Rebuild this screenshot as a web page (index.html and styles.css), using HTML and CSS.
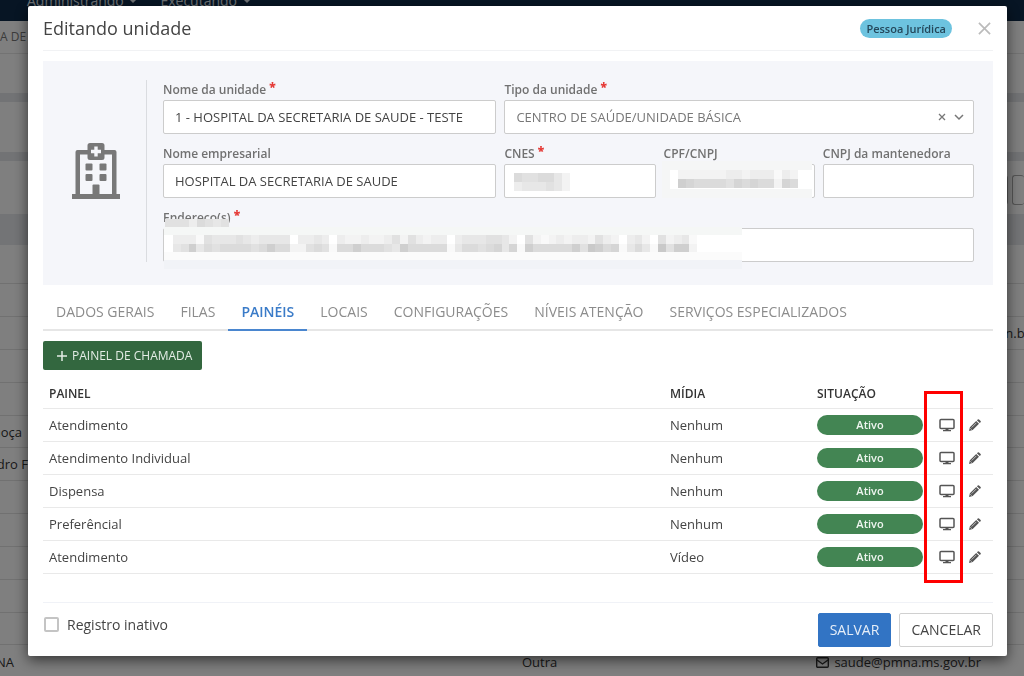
FILE: index.html
```html
<!DOCTYPE html>
<html lang="pt-BR">
<head>
<meta charset="utf-8">
<meta name="viewport" content="width=device-width, initial-scale=1">
<title>Editando unidade</title>
<link rel="stylesheet" href="styles.css">
</head>
<body>
<svg class="defs" aria-hidden="true">
  <symbol id="monitor" viewBox="0 0 16 14">
    <rect x="1" y="1.500" width="14" height="9" rx="1" fill="none" stroke="currentColor" stroke-width="1.500"/>
    <path d="M6.500 10.500h3v1.500h2.500v1.200H4v-1.200h2.500z" fill="currentColor"/>
  </symbol>
  <symbol id="pencil" viewBox="0 0 12 12">
    <path d="M0 12l.9-3.700 6.300-6.300 2.800 2.800-6.300 6.300zM7.900 1.300L8.800.4q.6-.5 1.200 0l1.600 1.600q.5.6 0 1.200l-.9.9z" fill="currentColor"/>
    <path d="M2.600 8.600l4.700-4.700M1.300 9.300l1.400 1.400" stroke="#fff" stroke-width=".6"/>
  </symbol>
</svg>

<div class="page" inert>
  <nav class="topbar"><span>Administrando <i class="caret"></i></span><span>Executando <i class="caret"></i></span></nav>
  <div class="crumb">A DE S</div>
  <div class="block block-a"></div>
  <div class="block block-b"></div>
  <div class="tools"><span class="tool"></span><span class="tool tool-last"></span></div>
  <div class="list-head"></div>
  <div class="list">
    <div class="row row-tall"></div>
    <div class="row"></div>
    <div class="row"><span class="cell-end">n.br</span></div>
    <div class="row"></div>
    <div class="row"></div>
    <div class="row"><span class="cell-cut">noça</span></div>
    <div class="row"><span class="cell-cut">dro F</span></div>
    <div class="row"></div>
    <div class="row"></div>
    <div class="row"></div>
    <div class="row"></div>
    <div class="row"></div>
    <div class="row row-last">
      <span class="cell-cut">NA</span>
      <span class="cell-type">Outra</span>
      <span class="cell-mail"><svg class="mail" viewBox="0 0 13 11"><rect x=".7" y=".7" width="11.600" height="9.600" rx="1" fill="none" stroke="currentColor" stroke-width="1.400"/><path d="M1 3l5.500 4L12 3" fill="none" stroke="currentColor" stroke-width="1.400"/></svg>saude@pmna.ms.gov.br</span>
    </div>
  </div>
</div>

<div class="overlay">
  <form class="modal" role="dialog" aria-labelledby="title">
    <header class="modal-head">
      <h1 id="title">Editando unidade</h1>
      <span class="badge">Pessoa Jurídica</span>
      <button type="button" class="close" aria-label="Fechar"><svg viewBox="0 0 14 14"><path d="M1 1l12 12M13 1L1 13" stroke="currentColor" stroke-width="1.800"/></svg></button>
    </header>

    <section class="unit">
      <div class="unit-icon">
        <svg viewBox="0 0 48 56" fill="#787878">
          <path d="M3.500 9a2 2 0 0 1 2-2H16v4.500H8V51h32V11.500h-8V7h10.500a2 2 0 0 1 2 2v42H48v5H0v-5h3.500z"/>
          <path fill-rule="evenodd" d="M18 0h12a2.500 2.500 0 0 1 2.500 2.500v12A2.500 2.500 0 0 1 30 17H18a2.500 2.500 0 0 1-2.500-2.500v-12A2.500 2.500 0 0 1 18 0zM22.300 3.500v3.300H19v3.400h3.300v3.300h3.400v-3.300H29V6.800h-3.300V3.500z"/>
          <rect x="13.500" y="20.500" width="7" height="7" rx="1"/><rect x="27.500" y="20.500" width="7" height="7" rx="1"/>
          <rect x="13.500" y="31" width="7" height="7" rx="1"/><rect x="27.500" y="31" width="7" height="7" rx="1"/>
          <path d="M20.500 52V42.500a1 1 0 0 1 1-1h5a1 1 0 0 1 1 1V52z"/>
        </svg>
      </div>
      <div class="fields">
        <div class="field">
          <label for="nome">Nome da unidade <b>*</b></label>
          <input id="nome" type="text" value="1 - HOSPITAL DA SECRETARIA DE SAUDE - TESTE">
        </div>
        <div class="field span-3">
          <label for="tipo">Tipo da unidade <b>*</b></label>
          <div class="control">
            <select id="tipo"><option>CENTRO DE SAÚDE/UNIDADE BÁSICA</option></select>
            <span class="select-icons">
              <svg viewBox="0 0 8 8"><path d="M1 1l6 6M7 1L1 7" stroke="currentColor" stroke-width="1.300"/></svg>
              <svg class="chev" viewBox="0 0 10 8"><path d="M1 2l4 4 4-4" fill="none" stroke="currentColor" stroke-width="1.500"/></svg>
            </span>
          </div>
        </div>
        <div class="field">
          <label for="empresa">Nome empresarial</label>
          <input id="empresa" type="text" value="HOSPITAL DA SECRETARIA DE SAUDE">
        </div>
        <div class="field">
          <label for="cnes">CNES <b>*</b></label>
          <div class="control"><input id="cnes" type="text"><svg class="mask mask-cnes" viewBox="0 0 56 18" data-cells="6556642,3444542"></svg></div>
        </div>
        <div class="field">
          <label for="cpf">CPF/CNPJ</label>
          <div class="control"><input id="cpf" type="text"><span class="mask veil-cpf"><svg viewBox="0 0 120 18" data-cells="222222332333132,876666576766276"></svg></span></div>
        </div>
        <div class="field">
          <label for="mant">CNPJ da mantenedora</label>
          <input id="mant" type="text">
        </div>
        <div class="field span-4">
          <label for="end">Endereço(s) <b>*</b></label>
          <div class="control">
            <input id="end" type="text">
            <svg class="mask mask-label" viewBox="0 0 64 8" preserveAspectRatio="none" data-cells="55536545"></svg>
            <span class="mask veil-end"><svg viewBox="0 0 544 18" preserveAspectRatio="none" data-cells="33315444543444403343032232235253233034445542052123233253203420523410,45846566665686622565166866654866666146656747186666685986714641958820"></svg></span>
          </div>
        </div>
      </div>
    </section>

    <nav class="tabs" role="tablist">
      <button type="button" role="tab">DADOS GERAIS</button>
      <button type="button" role="tab">FILAS</button>
      <button type="button" role="tab" aria-selected="true" class="active">PAINÉIS</button>
      <button type="button" role="tab">LOCAIS</button>
      <button type="button" role="tab">CONFIGURAÇÕES</button>
      <button type="button" role="tab">NÍVEIS ATENÇÃO</button>
      <button type="button" role="tab">SERVIÇOS ESPECIALIZADOS</button>
    </nav>

    <button type="button" class="add"><svg viewBox="0 0 10 10"><path d="M5 0v10M0 5h10" stroke="currentColor" stroke-width="1.500"/></svg>PAINEL DE CHAMADA</button>

    <div class="panels">
      <table>
        <colgroup><col><col class="c-media"><col class="c-state"><col class="c-act"><col class="c-act"></colgroup>
        <thead><tr><th>PAINEL</th><th>MÍDIA</th><th>SITUAÇÃO</th><th></th><th></th></tr></thead>
        <tbody>
          <tr><td>Atendimento</td><td>Nenhum</td><td><span class="pill">Ativo</span></td><td><button type="button" aria-label="Abrir painel"><svg class="mon"><use href="#monitor"/></svg></button></td><td><button type="button" aria-label="Editar"><svg class="pen"><use href="#pencil"/></svg></button></td></tr>
          <tr><td>Atendimento Individual</td><td>Nenhum</td><td><span class="pill">Ativo</span></td><td><button type="button" aria-label="Abrir painel"><svg class="mon"><use href="#monitor"/></svg></button></td><td><button type="button" aria-label="Editar"><svg class="pen"><use href="#pencil"/></svg></button></td></tr>
          <tr><td>Dispensa</td><td>Nenhum</td><td><span class="pill">Ativo</span></td><td><button type="button" aria-label="Abrir painel"><svg class="mon"><use href="#monitor"/></svg></button></td><td><button type="button" aria-label="Editar"><svg class="pen"><use href="#pencil"/></svg></button></td></tr>
          <tr><td>Preferêncial</td><td>Nenhum</td><td><span class="pill">Ativo</span></td><td><button type="button" aria-label="Abrir painel"><svg class="mon"><use href="#monitor"/></svg></button></td><td><button type="button" aria-label="Editar"><svg class="pen"><use href="#pencil"/></svg></button></td></tr>
          <tr><td>Atendimento</td><td>Vídeo</td><td><span class="pill">Ativo</span></td><td><button type="button" aria-label="Abrir painel"><svg class="mon"><use href="#monitor"/></svg></button></td><td><button type="button" aria-label="Editar"><svg class="pen"><use href="#pencil"/></svg></button></td></tr>
        </tbody>
      </table>
      <div class="highlight"></div>
    </div>

    <footer class="modal-foot">
      <label class="check"><input type="checkbox">Registro inativo</label>
      <div class="actions">
        <button type="submit" class="btn primary">SALVAR</button>
        <button type="button" class="btn">CANCELAR</button>
      </div>
    </footer>
  </form>
</div>
<script src="mask.js"></script>
</body>
</html>
```
FILE: styles.css
```css
* { box-sizing: border-box; }
body {
  margin: 0;
  height: 100vh;
  overflow: hidden;
  font: 13px/20px "Open Sans", "Noto Sans", sans-serif;
  color: #444;
}
button, input, select { font: inherit; color: inherit; }
button { padding: 0; border: 0; background: none; cursor: pointer; }
svg { display: block; }
.defs { position: absolute; width: 0; height: 0; }

/* Listing behind the dialog */
.page { background: #fff; }
.topbar {
  display: flex;
  gap: 24px;
  height: 21px;
  padding-left: 27px;
  background: #0e2a48;
  color: #dde3ea;
  font-size: 14px;
  line-height: 0;
}
.caret {
  display: inline-block;
  margin-left: 3px;
  border: 3px solid transparent;
  border-top-color: currentColor;
}
.crumb {
  height: 33px;
  border-bottom: 1px solid #e6e6e6;
  font-size: 12px;
  line-height: 32px;
  white-space: nowrap;
  color: #777;
}
.block { border-bottom: 9px solid #e4e6ea; }
.block-a { height: 48px; }
.block-b { height: 59px; }
.tools {
  display: flex;
  justify-content: flex-end;
  gap: 4px;
  height: 53px;
  padding-top: 14px;
}
.tool { width: 40px; height: 30px; border: 1px solid #aaa; border-radius: 3px; }
.tool-last { width: 12px; border-right: 0; }
.list-head { height: 31px; background: #e6e8ec; }
.row {
  display: flex;
  align-items: center;
  height: 33px;
  border-bottom: 1px solid #e2e2e2;
  color: #333;
}
.row:nth-child(6n) { height: 32px; }
.row-tall { height: 39px; }
.row-last { height: 35px; }
.cell-cut { width: 22px; display: flex; white-space: nowrap; justify-content: flex-end; }
.row:nth-child(7) .cell-cut { width: 28px; }
.row-last .cell-cut { width: 14px; }
.cell-end { margin-left: auto; margin-right: -6px; }
.cell-type { flex: 1; margin-left: 508px; }
.cell-mail { display: flex; align-items: center; gap: 5px; margin-right: 43px; }
.mail { width: 13px; height: 11px; }

/* Dialog */
.overlay {
  position: fixed;
  inset: 0;
  padding: 6px 17px 20px 28px;
  background: rgba(0, 0, 0, .5);
}
.modal {
  padding: 0 14px 9px 15px;
  background: #fff;
  border-radius: 2px;
  box-shadow: 0 4px 14px rgba(0, 0, 0, .6);
}
.modal-head {
  display: flex;
  align-items: center;
  height: 45px;
  border-bottom: 1px solid #f1f2f4;
}
.modal-head h1 { flex: 1; margin: 0; font-size: 18px; font-weight: 400; line-height: 24px; color: #444; }
.badge {
  padding: 0 6px;
  border-radius: 10px;
  background: #6dc3df;
  color: #24475a;
  font-size: 11px;
  font-weight: 600;
  line-height: 19px;
}
.close { margin: 0 2px 0 26px; color: #bbb; }
.close svg { width: 13px; height: 13px; }

.unit {
  display: flex;
  margin-top: 10px;
  padding: 19px 19px 23px 0;
  background: #f5f6fa;
}
.unit-icon {
  display: flex;
  align-items: center;
  justify-content: center;
  width: 104px;
  padding-left: 2px;
  border-right: 1px solid #dadce0;
}
.unit-icon svg { width: 48px; height: 56px; }
.fields {
  flex: 1;
  display: grid;
  grid-template-columns: 333fr 151fr 151fr 151fr;
  gap: 10px 8px;
  margin-left: 16px;
}
.field { min-width: 0; }
.field label { display: block; height: 20px; font-size: 12px; font-weight: 600; color: #717171; white-space: nowrap; }
.field label b { color: #e53935; font-size: 12px; line-height: 12px; vertical-align: 3px; }
.span-3 { grid-column: span 3; }
.span-4 { grid-column: span 4; }
.field input, .field select {
  display: block;
  width: 100%;
  height: 34px;
  padding: 0 11px;
  border: 1px solid #ccc;
  border-radius: 2px;
  background: #fff;
  color: #444;
  font-size: 13px;
  appearance: none;
}
.field select { color: #777; }
.control { position: relative; }
.select-icons {
  position: absolute;
  inset: 0 10px 0 auto;
  display: flex;
  align-items: center;
  gap: 8px;
  color: #777;
  pointer-events: none;
}
.select-icons svg { width: 8px; height: 8px; }
.select-icons .chev { width: 10px; }

/* Pixelated personal data */
.mask { position: absolute; }
.mask-cnes { left: 10px; top: 9px; width: 56px; height: 18px; }
.mask-label { left: 2px; top: -9px; width: 64px; height: 9px; }
.veil-cpf {
  inset: -3px 3px 0 -2px;
  padding: 0 0 0 8px;
  border: solid #f5f6f6;
  border-width: 9px 0 9px 8px;
  background: #fff;
}
.veil-cpf svg { width: 120px; height: 18px; }
.veil-end {
  left: 1px;
  top: -1px;
  width: 578px;
  height: 42px;
  padding-left: 9px;
  border: solid #f5f7f6;
  border-width: 8px 0 0;
  background: linear-gradient(#fff 17px, #fbfbfb 17px 25px, #f1f3f7 25px);
}
.veil-end svg { width: 532px; height: 17px; }

.tabs {
  display: flex;
  height: 46px;
  border-bottom: 2px solid #e6e6e6;
}
.tabs button {
  height: 46px;
  padding: 9px 13px 0;
  border-bottom: 2px solid transparent;
  color: #8c8c8c;
  font-size: 14px;
  white-space: nowrap;
}
.tabs .active { border-color: #4a86cf; color: #3a7bc8; font-weight: 600; }

.add {
  display: flex;
  align-items: center;
  gap: 5px;
  height: 29px;
  margin-top: 10px;
  padding: 0 10px 0 14px;
  border-radius: 2px;
  background: #33673f;
  color: #e3ece5;
  font-size: 12px;
}
.add svg { width: 10px; height: 10px; }

.panels { position: relative; margin-top: 11px; }
table { width: 100%; border-collapse: collapse; table-layout: fixed; }
.c-media { width: 147px; }
.c-state { width: 118px; }
.c-act { width: 32px; }
th, td {
  height: 33px;
  padding: 0 6px;
  border-bottom: 1px solid #e9e9e9;
  text-align: left;
  white-space: nowrap;
}
th { height: 27px; font-size: 12px; font-weight: 600; color: #333; }
td button { display: block; margin-left: 4px; color: #555; }
td:last-child button { margin-left: 2px; }
.mon { width: 16px; height: 14px; }
.pen { width: 12px; height: 12px; }
.pill {
  display: block;
  border-radius: 10px;
  background: #438553;
  color: #eef5ef;
  font-size: 11px;
  font-weight: 600;
  line-height: 20px;
  text-align: center;
}
.highlight {
  position: absolute;
  inset: 10px 30px -9px auto;
  width: 39px;
  border: 3px solid #f00;
  pointer-events: none;
}

.modal-foot {
  display: flex;
  justify-content: space-between;
  margin-top: 28px;
  padding-top: 10px;
  border-top: 1px solid #f0f2f7;
}
.check { display: flex; align-items: center; gap: 8px; height: 24px; font-size: 14px; color: #444; }
.check input {
  appearance: none;
  width: 15px;
  height: 15px;
  margin: 0 0 0 1px;
  border: 2px solid #c4c4c4;
  border-radius: 2px;
  background: #fff;
}
.actions { display: flex; gap: 8px; }
.btn {
  height: 34px;
  padding: 0 11px;
  border: 1px solid #d0d0d0;
  border-radius: 2px;
  background: #fff;
  color: #444;
  font-size: 14px;
}
.primary { border-color: #3274c4; background: #3274c4; color: #e6eef8; }
```
FILE: mask.js
```js
// Fills each mask with grey cells; every digit is a shade, every comma starts a row.
document.querySelectorAll('svg[data-cells]').forEach(function (svg) {
  svg.setAttribute('shape-rendering', 'crispEdges');
  svg.dataset.cells.split(',').forEach(function (row, y) {
    row.split('').forEach(function (digit, x) {
      var rect = document.createElementNS('http://www.w3.org/2000/svg', 'rect');
      var shade = 255 - digit * 6;
      rect.setAttribute('x', x * 8);
      rect.setAttribute('y', y * 9);
      rect.setAttribute('width', 8);
      rect.setAttribute('height', 9);
      rect.setAttribute('fill', 'rgb(' + shade + ',' + shade + ',' + shade + ')');
      svg.appendChild(rect);
    });
  });
});
```
